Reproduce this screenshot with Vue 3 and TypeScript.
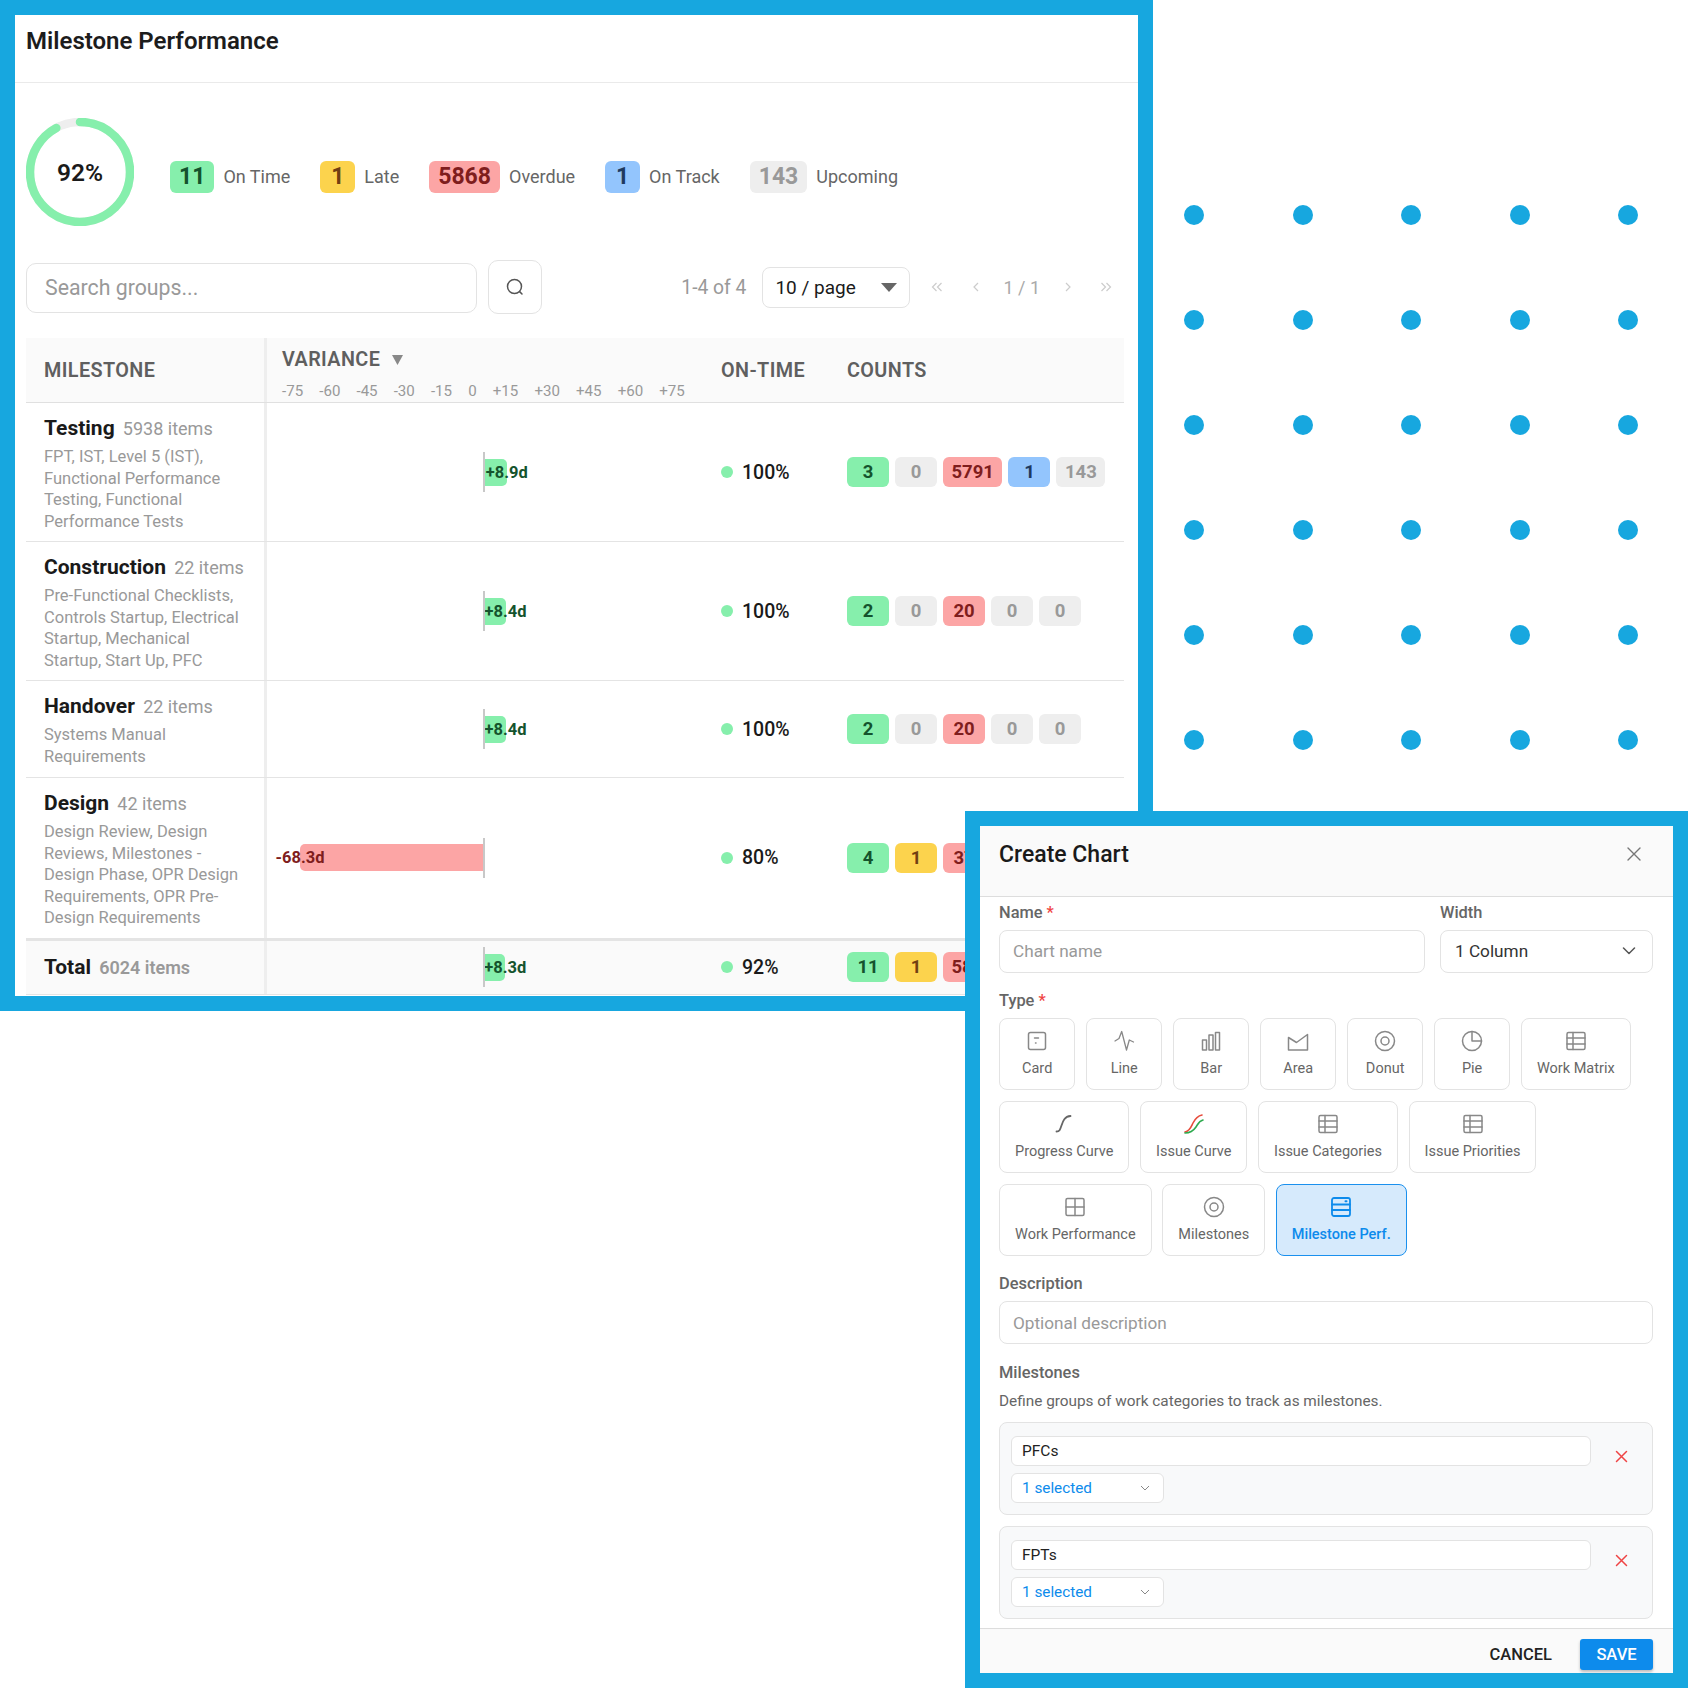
<template>
  <div class="page">
    <section class="panel">
      <header class="panel__head">Milestone Performance</header>

      <div class="stats">
        <div class="ring">
          <svg width="108" height="108" viewBox="0 0 108 108">
            <circle cx="54" cy="54" r="50" fill="none" stroke="#eeeeee" stroke-width="8.5" />
            <circle class="ring__value" cx="54" cy="54" r="50" fill="none" stroke="#86efac" stroke-width="8.5"
              stroke-linecap="round" stroke-dasharray="289 314" />
          </svg>
          <span class="ring__text">92%</span>
        </div>
        <div class="stats__list">
          <div v-for="s in summary" :key="s.label" class="stat">
            <span class="stat__num" :class="s.tone">{{ s.value }}</span>
            <span class="stat__label">{{ s.label }}</span>
          </div>
        </div>
      </div>

      <div class="toolbar">
        <input class="search" placeholder="Search groups..." readonly />
        <button class="search-btn">
          <svg width="20" height="20" viewBox="0 0 20 20" fill="none" stroke="#555" stroke-width="1.5" stroke-linecap="round">
            <circle cx="9.5" cy="9.5" r="7" />
            <path d="M14.6 14.6 17 17" />
          </svg>
        </button>
        <div class="pager">
          <span class="pager__range">1-4 of 4</span>
          <div class="pager__size">
            <span>10 / page</span>
            <svg width="16" height="9" viewBox="0 0 16 9"><path d="M0 0h16L8 9z" fill="#666" /></svg>
          </div>
          <div class="pager__nav">
            <svg width="12" height="12" viewBox="0 0 12 12" class="nav-ic"><path d="M5.500 2 1.500 6l4 4M10.500 2l-4 4 4 4" /></svg>
            <svg width="12" height="12" viewBox="0 0 12 12" class="nav-ic"><path d="M8 2 4 6l4 4" /></svg>
            <span class="pager__page">1 / 1</span>
            <svg width="12" height="12" viewBox="0 0 12 12" class="nav-ic"><path d="m4 2 4 4-4 4" /></svg>
            <svg width="12" height="12" viewBox="0 0 12 12" class="nav-ic"><path d="m1.500 2 4 4-4 4M6.500 2l4 4-4 4" /></svg>
          </div>
        </div>
      </div>

      <div class="table">
        <div class="row row--head">
          <div class="cell cell--name th">MILESTONE</div>
          <div class="cell cell--var">
            <div class="th th--var">VARIANCE
              <svg width="11" height="11" viewBox="0 0 11 11"><path d="M0 1h11L5.500 11z" fill="#888" /></svg>
            </div>
            <div class="ticks"><span v-for="t in ticks" :key="t">{{ t }}</span></div>
          </div>
          <div class="cell cell--pct th">ON-TIME</div>
          <div class="cell cell--counts th">COUNTS</div>
        </div>

        <div v-for="r in rows" :key="r.name" class="row" :class="{ 'row--total': r.total }">
          <div class="cell cell--name cell--body">
            <div class="name">{{ r.name }} <span class="items">{{ r.items }} items</span></div>
            <div v-if="r.desc" class="desc">
              <div v-for="line in r.desc" :key="line">{{ line }}</div>
            </div>
          </div>
          <div class="cell cell--var cell--chart">
            <span class="axis"></span>
            <span class="bar" :class="r.days > 0 ? 'bar--up' : 'bar--down'" :style="{ width: Math.abs(r.days) * 2.68 + 'px' }">
              <span class="bar__label">{{ r.days > 0 ? '+' : '' }}{{ r.days.toFixed(1) }}d</span>
            </span>
          </div>
          <div class="cell cell--pct pct"><i class="pct__dot"></i>{{ r.pct }}%</div>
          <div class="cell cell--counts chips">
            <span v-for="(c, i) in r.counts" :key="i" class="chip" :class="c === 0 ? 'gray' : tones[i]">{{ c }}</span>
          </div>
        </div>
      </div>
    </section>

    <section class="dots">
      <i v-for="n in 30" :key="n" class="dot"></i>
    </section>

    <section class="modal">
      <header class="modal__head">
        <span>Create Chart</span>
        <svg width="16" height="16" viewBox="0 0 16 16" stroke="#777" stroke-width="1.4" stroke-linecap="round"><path d="m2 2 12 12M14 2 2 14" /></svg>
      </header>

      <div class="modal__body">
        <div class="form-row">
          <div class="field field--grow">
            <label class="lbl">Name <em>*</em></label>
            <input class="inp" placeholder="Chart name" readonly />
          </div>
          <div class="field field--width">
            <label class="lbl">Width</label>
            <div class="inp inp--select">
              <span>1 Column</span>
              <svg width="14" height="8" viewBox="0 0 14 8" fill="none" stroke="#555" stroke-width="1.5" stroke-linecap="round" stroke-linejoin="round"><path d="m1.500 1 5.500 5.500L12.500 1" /></svg>
            </div>
          </div>
        </div>

        <label class="lbl lbl--type">Type <em>*</em></label>
        <div class="types">
          <button v-for="t in chartTypes" :key="t.label" class="type" :class="{ 'type--on': t.on }">
            <svg width="22" height="22" viewBox="0 0 22 22" fill="none" :stroke="t.on ? '#0d8bec' : '#888'" stroke-width="1.5" stroke-linecap="round" stroke-linejoin="round">
              <template v-if="t.icon === 'card'">
                <rect x="2.500" y="2.500" width="17" height="17" rx="2" /><path d="M8.500 8h4M9.500 13h.5" />
              </template>
              <path v-else-if="t.icon === 'line'" d="M2 11 6 8.500 8.700 1.500 13.500 20 16.300 10 20.500 12" stroke-width="1.300" />
              <template v-else-if="t.icon === 'bar'">
                <rect x="2.500" y="10" width="4" height="10" /><rect x="9" y="5" width="4" height="15" /><rect x="15.500" y="2.500" width="4" height="17.500" />
              </template>
              <path v-else-if="t.icon === 'area'" d="M1.500 7.500 9.500 12.500 20.500 4.500V20h-19z" />
              <template v-else-if="t.icon === 'donut'">
                <circle cx="11" cy="11" r="9.500" /><circle cx="11" cy="11" r="4" />
              </template>
              <template v-else-if="t.icon === 'pie'">
                <circle cx="11" cy="11" r="9.500" /><path d="M11 1.500V11h9.500" />
              </template>
              <template v-else-if="t.icon === 'table'">
                <rect x="2" y="2.500" width="18" height="17" rx="1.500" /><path d="M2 8h18M2 14h18M8 2.500v17" />
              </template>
              <template v-else-if="t.icon === 'grid'">
                <rect x="2" y="2.500" width="18" height="17" rx="1.500" /><path d="M2 11h18M11 2.500v17" />
              </template>
              <path v-else-if="t.icon === 'curve'" d="M3.500 18.500c3 0 3.500-1.500 5-6s3-9 9-9.500" stroke="#666" stroke-width="1.800" />
              <template v-else-if="t.icon === 'issue'">
                <path d="M2 19c5-1 6-5 8-9s4-7 9-8" stroke="#e74c3c" stroke-width="1.600" />
                <path d="M2 20c6 0 9-3 11-6s3-6 7-7" stroke="#2eaa4f" stroke-width="1.600" />
              </template>
              <template v-else-if="t.icon === 'perf'">
                <rect x="2" y="2" width="18" height="18" rx="2" stroke-width="1.800" /><path d="M2 8.500h18M2 14h18" stroke-width="1.800" /><path d="M15.500 5.200h1" stroke-width="2" />
              </template>
            </svg>
            <span>{{ t.label }}</span>
          </button>
        </div>

        <label class="lbl lbl--desc">Description</label>
        <input class="inp inp--wide" placeholder="Optional description" readonly />

        <label class="lbl lbl--ms">Milestones</label>
        <p class="help">Define groups of work categories to track as milestones.</p>

        <div v-for="m in groups" :key="m" class="group">
          <div class="group__fields">
            <input class="group__name" :value="m" readonly />
            <div class="group__select">
              <span>1 selected</span>
              <svg width="10" height="6" viewBox="0 0 10 6" fill="none" stroke="#888" stroke-width="1"><path d="m1 1 4 4 4-4" /></svg>
            </div>
          </div>
          <svg class="group__del" width="13" height="13" viewBox="0 0 13 13" stroke="#ef4444" stroke-width="1.500" stroke-linecap="round"><path d="m1.500 1.500 10 10M11.500 1.500l-10 10" /></svg>
        </div>
      </div>

      <footer class="modal__foot">
        <button class="btn-cancel">CANCEL</button>
        <button class="btn-save">SAVE</button>
      </footer>
    </section>
  </div>
</template>

<script setup lang="ts">
interface Row {
  name: string
  items: number
  desc?: string[]
  days: number
  pct: number
  counts: number[]
  total?: boolean
}

const tones = ['green', 'yellow', 'red', 'blue', 'gray']

const summary = [
  { value: 11, label: 'On Time', tone: 'green' },
  { value: 1, label: 'Late', tone: 'yellow' },
  { value: 5868, label: 'Overdue', tone: 'red' },
  { value: 1, label: 'On Track', tone: 'blue' },
  { value: 143, label: 'Upcoming', tone: 'gray' },
]

const ticks = ['-75', '-60', '-45', '-30', '-15', '0', '+15', '+30', '+45', '+60', '+75']

const rows: Row[] = [
  {
    name: 'Testing', items: 5938, days: 8.9, pct: 100, counts: [3, 0, 5791, 1, 143],
    desc: ['FPT, IST, Level 5 (IST),', 'Functional Performance', 'Testing, Functional', 'Performance Tests'],
  },
  {
    name: 'Construction', items: 22, days: 8.4, pct: 100, counts: [2, 0, 20, 0, 0],
    desc: ['Pre-Functional Checklists,', 'Controls Startup, Electrical', 'Startup, Mechanical', 'Startup, Start Up, PFC'],
  },
  {
    name: 'Handover', items: 22, days: 8.4, pct: 100, counts: [2, 0, 20, 0, 0],
    desc: ['Systems Manual', 'Requirements'],
  },
  {
    name: 'Design', items: 42, days: -68.3, pct: 80, counts: [4, 1, 37, 0, 0],
    desc: ['Design Review, Design', 'Reviews, Milestones -', 'Design Phase, OPR Design', 'Requirements, OPR Pre-', 'Design Requirements'],
  },
  { name: 'Total', items: 6024, days: 8.3, pct: 92, counts: [11, 1, 5868, 1, 143], total: true },
]

const chartTypes = [
  { label: 'Card', icon: 'card' },
  { label: 'Line', icon: 'line' },
  { label: 'Bar', icon: 'bar' },
  { label: 'Area', icon: 'area' },
  { label: 'Donut', icon: 'donut' },
  { label: 'Pie', icon: 'pie' },
  { label: 'Work Matrix', icon: 'table' },
  { label: 'Progress Curve', icon: 'curve' },
  { label: 'Issue Curve', icon: 'issue' },
  { label: 'Issue Categories', icon: 'table' },
  { label: 'Issue Priorities', icon: 'table' },
  { label: 'Work Performance', icon: 'grid' },
  { label: 'Milestones', icon: 'donut' },
  { label: 'Milestone Perf.', icon: 'perf', on: true },
]

const groups = ['PFCs', 'FPTs']
</script>

<style>
body {
  margin: 0;
  background: #fff;
}
</style>

<style scoped>
.page {
  position: relative;
  width: 1688px;
  height: 1688px;
  overflow: hidden;
  background: #fff;
  font-family: Roboto, 'Liberation Sans', sans-serif;
  color: #1a1a1a;
}
.panel {
  position: absolute;
  left: 0;
  top: 0;
  width: 1153px;
  height: 1011px;
  box-sizing: border-box;
  border: 15px solid #17a7df;
  background: #fff;
  overflow: hidden;
}
.panel__head {
  height: 68px;
  padding: 10px 11px 0;
  box-sizing: border-box;
  border-bottom: 1px solid #eaeaea;
  font-size: 24px;
  font-weight: 600;
  line-height: 32px;
  color: #1c1c1c;
}
.stats {
  display: flex;
  align-items: center;
  gap: 36px;
  margin: 35px 0 0 11px;
}
.ring {
  position: relative;
  width: 108px;
  height: 108px;
}
.ring__value {
  transform: rotate(-90deg);
  transform-origin: center;
}
.ring__text {
  position: absolute;
  inset: 0;
  display: flex;
  align-items: center;
  justify-content: center;
  font-size: 24.5px;
  font-weight: 600;
}
.stats__list {
  display: flex;
  gap: 30px;
  margin-top: 10px;
}
.stat {
  display: flex;
  align-items: center;
  gap: 9px;
}
.stat__num {
  min-width: 35px;
  height: 32px;
  padding: 0 9px;
  box-sizing: border-box;
  border-radius: 6px;
  font-size: 23px;
  font-weight: 700;
  line-height: 32px;
  text-align: center;
}
.stat__label {
  padding-bottom: 2px;
  font-size: 18px;
  color: #666;
}
.green { background: #86efac; color: #14532d; }
.yellow { background: #fcd34d; color: #713f12; }
.red { background: #fca5a5; color: #7f1d1d; }
.blue { background: #93c5fd; color: #1e3a5f; }
.gray { background: #eeeeee; color: #999; }
.toolbar {
  display: flex;
  align-items: center;
  margin: 34px 14px 0 11px;
  height: 54px;
}
.search {
  width: 451px;
  height: 50px;
  margin-top: 2px;
  box-sizing: border-box;
  padding: 0 18px 2px;
  border: 1px solid #e3e3e3;
  border-radius: 10px;
  font: 21.3px Roboto, sans-serif;
  outline: none;
}
.search::placeholder,
.inp::placeholder {
  color: #999;
}
.search-btn {
  display: flex;
  align-items: center;
  justify-content: center;
  width: 54px;
  height: 54px;
  margin-left: 11px;
  padding: 0;
  background: #fff;
  border: 1px solid #e3e3e3;
  border-radius: 10px;
}
.pager {
  display: flex;
  align-items: center;
  margin-left: auto;
}
.pager__range {
  font-size: 19.3px;
  color: #999;
  margin-right: 16px;
}
.pager__size {
  display: flex;
  align-items: center;
  justify-content: space-between;
  width: 148px;
  height: 41px;
  box-sizing: border-box;
  padding: 0 12px;
  border: 1px solid #e3e3e3;
  border-radius: 8px;
  font-size: 19px;
}
.pager__nav {
  display: flex;
  align-items: center;
  gap: 26.5px;
  margin: 0 12px 0 21px;
}
.pager__page {
  font-size: 18px;
  color: #aaa;
  margin: 0 -5px;
}
.nav-ic {
  fill: none;
  stroke: #ccc;
  stroke-width: 1.2;
}
.table {
  margin: 24px 14px 0 11px;
}
.row {
  display: grid;
  grid-template-columns: 241px 438px 126px 1fr;
  border-bottom: 1px solid #e4e4e4;
}
.row--head {
  height: 64px;
  background: #fafafa;
  border-bottom: 1.5px solid #e0e0e0;
}
.row--total {
  height: 57px;
  box-sizing: border-box;
  background: #fafafa;
  border-top: 3px solid #e4e4e4;
  margin-top: -1px;
}
.cell {
  box-sizing: border-box;
  display: flex;
  align-items: center;
  min-width: 0;
}
.cell--name {
  padding: 0 8px 0 18px;
  border-right: 3px solid #eeeeee;
}
.cell--body {
  display: block;
  min-height: 96px;
  padding-top: 10.5px;
  padding-bottom: 9px;
}
.row--total .cell--body {
  min-height: 0;
  padding-top: 12px;
}
.cell--var {
  position: relative;
}
.row--head .cell--var {
  display: block;
  padding: 9px 0 0 15px;
}
.cell--pct {
  padding-left: 16px;
}
.cell--counts {
  padding-left: 16px;
}
.th {
  font-size: 19.8px;
  font-weight: 600;
  letter-spacing: 0.4px;
  color: #5f5f5f;
}
.th--var {
  display: flex;
  align-items: center;
  gap: 12px;
  height: 24px;
}
.ticks {
  display: flex;
  gap: 16.1px;
  margin-top: 11px;
  font-size: 15.1px;
  line-height: 18px;
  color: #999;
}
.name {
  height: 29px;
  margin-bottom: 3.5px;
  font-size: 21px;
  font-weight: 700;
  line-height: 29px;
  white-space: nowrap;
}
.items {
  margin-left: 3px;
  font-size: 18px;
  font-weight: 400;
  color: #999;
}
.row--total .items {
  font-weight: 600;
}
.desc {
  font-size: 16.5px;
  line-height: 21.5px;
  color: #999;
  white-space: nowrap;
}
.cell--chart {
  position: relative;
}
.axis {
  position: absolute;
  left: 216px;
  top: 50%;
  width: 1.5px;
  height: 40px;
  margin-top: -20px;
  background: #c8c8c8;
  z-index: 1;
}
.bar {
  position: absolute;
  top: 50%;
  height: 27px;
  margin-top: -13.5px;
}
.bar--up {
  left: 216px;
  background: #86efac;
  border-radius: 0 5px 5px 0;
}
.bar--down {
  right: calc(100% - 216px);
  background: #fca5a5;
  border-radius: 5px 0 0 5px;
}
.bar__label {
  position: absolute;
  top: 0;
  font-size: 16.5px;
  font-weight: 700;
  line-height: 27px;
  white-space: nowrap;
  transform: translateX(-50%);
}
.bar--up .bar__label {
  left: 100%;
  color: #14532d;
}
.bar--down .bar__label {
  left: 0;
  color: #7f1d1d;
}
.pct {
  gap: 9px;
  font-size: 19.5px;
  font-weight: 500;
}
.pct__dot {
  width: 12px;
  height: 12px;
  border-radius: 50%;
  background: #86efac;
}
.chips {
  gap: 6px;
}
.chip {
  min-width: 42px;
  height: 30px;
  padding: 0 8.5px;
  box-sizing: border-box;
  border-radius: 6px;
  font-size: 18.5px;
  font-weight: 700;
  line-height: 30px;
  text-align: center;
  white-space: nowrap;
}
.dots {
  position: absolute;
  left: 1184.25px;
  top: 205px;
  display: grid;
  grid-template-columns: repeat(5, 20px);
  grid-auto-rows: 20px;
  column-gap: 88.5px;
  row-gap: 85px;
}
.dot {
  border-radius: 50%;
  background: #17a7df;
}
.modal {
  position: absolute;
  left: 965px;
  top: 811px;
  width: 723px;
  height: 877px;
  box-sizing: border-box;
  border: 15px solid #17a7df;
  background: #fff;
  display: flex;
  flex-direction: column;
}
.modal__head {
  display: flex;
  justify-content: space-between;
  align-items: flex-start;
  height: 71px;
  box-sizing: border-box;
  padding: 14px 31px 0 19px;
  background: #fafafa;
  border-bottom: 1.5px solid #dddddd;
  font-size: 23px;
  font-weight: 500;
  line-height: 30px;
}
.modal__head svg {
  margin-top: 6px;
}
.modal__body {
  flex: 1;
  min-height: 0;
  overflow: hidden;
  padding: 6px 20px 0 19px;
}
.form-row {
  display: flex;
  gap: 15px;
}
.field {
  display: flex;
  flex-direction: column;
}
.field--grow {
  flex: 1;
}
.field--width {
  width: 213px;
}
.lbl {
  display: block;
  height: 20px;
  margin-bottom: 7px;
  font-size: 16.4px;
  font-weight: 500;
  line-height: 20px;
  color: #666;
}
.lbl em {
  font-style: normal;
  color: #ef4444;
}
.inp {
  width: 100%;
  height: 43px;
  box-sizing: border-box;
  padding: 0 16px 1px 13px;
  border: 1.5px solid #e3e3e3;
  border-radius: 8px;
  font: 17.2px Roboto, sans-serif;
  outline: none;
}
.inp--select {
  display: flex;
  align-items: center;
  justify-content: space-between;
  padding-left: 14px;
  color: #333;
}
.lbl--type {
  margin-top: 18px;
}
.types {
  display: flex;
  flex-wrap: wrap;
  gap: 11px 10.6px;
}
.type {
  display: flex;
  flex-direction: column;
  align-items: center;
  min-width: 76.4px;
  height: 72px;
  box-sizing: border-box;
  padding: 11px 15px 0;
  background: #fff;
  border: 1.5px solid #e3e3e3;
  border-radius: 8px;
  font: 14.5px Roboto, sans-serif;
  color: #666;
}
.type span {
  margin-top: 8px;
  white-space: nowrap;
}
.type--on {
  background: #d6eafc;
  border-color: #1a90ee;
  color: #0d8bec;
  font-weight: 500;
}
.lbl--desc {
  margin-top: 18px;
}
.inp--wide {
  display: block;
  padding-bottom: 0;
}
.lbl--ms {
  margin-top: 19px;
  margin-bottom: 0;
}
.help {
  margin: 8px 0 11px;
  font-size: 15.35px;
  line-height: 20px;
  color: #666;
}
.group {
  display: flex;
  align-items: flex-start;
  height: 93px;
  box-sizing: border-box;
  padding: 13px 0 0 11px;
  margin-bottom: 11px;
  background: #f8f9fa;
  border: 1.5px solid #e3e3e3;
  border-radius: 8px;
}
.group__fields {
  width: 580px;
}
.group__name {
  display: block;
  width: 100%;
  height: 30px;
  box-sizing: border-box;
  padding: 0 10px;
  background: #fff;
  border: 1.5px solid #e3e3e3;
  border-radius: 6px;
  font: 15.5px Roboto, sans-serif;
  color: #222;
  outline: none;
}
.group__select {
  display: flex;
  align-items: center;
  justify-content: space-between;
  width: 153px;
  height: 30px;
  margin-top: 7px;
  box-sizing: border-box;
  padding: 0 13px 0 10px;
  background: #fff;
  border: 1.5px solid #e3e3e3;
  border-radius: 6px;
  font-size: 15.3px;
  color: #0d8bec;
}
.group__del {
  margin: 14px 0 0 24px;
}
.modal__foot {
  display: flex;
  justify-content: flex-end;
  align-items: center;
  gap: 28px;
  height: 45px;
  box-sizing: border-box;
  padding: 6px 20px 0 0;
  background: #fafafa;
  border-top: 1.5px solid #dddddd;
}
.btn-cancel {
  padding: 0;
  background: none;
  border: 0;
  font: 500 16.5px Roboto, sans-serif;
  color: #222;
}
.btn-save {
  width: 73px;
  height: 31px;
  padding: 0;
  background: #0d8bec;
  border: 0;
  border-radius: 3px;
  box-shadow: 0 2px 3px rgba(0, 0, 0, 0.25);
  font: 500 16.5px Roboto, sans-serif;
  color: #fff;
}
</style>
